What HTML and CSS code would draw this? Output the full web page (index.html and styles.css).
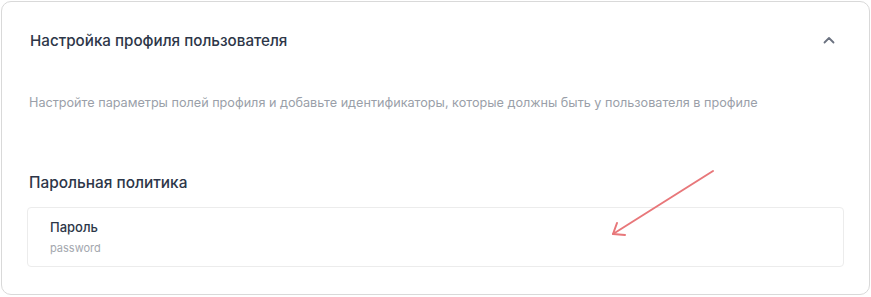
FILE: index.html
```html
<!DOCTYPE html>
<html lang="ru">
<head>
<meta charset="utf-8">
<link rel="stylesheet" href="styles.css">
</head>
<body>
<div class="card">
  <div class="header">
    <h2 class="title">Настройка профиля пользователя</h2>
    <svg class="chevron" width="12" height="8" viewBox="0 0 12 8"><path d="M1.5 6.5 L6 2 L10.5 6.5" fill="none" stroke="#6b7280" stroke-width="1.8" stroke-linecap="round" stroke-linejoin="round"/></svg>
  </div>
  <p class="desc">Настройте параметры полей профиля и добавьте идентификаторы, которые должны быть у пользователя в профиле</p>
  <h3 class="section">Парольная политика</h3>
  <div class="field">
    <div class="field-name">Пароль</div>
    <div class="field-key">password</div>
  </div>
  <svg class="arrow" width="871" height="297" viewBox="0 0 871 297"><g fill="none" stroke="#e8777a" stroke-width="2" stroke-linecap="round" stroke-linejoin="round"><path d="M713 171 L613 234"/><path d="M625 235 L613 234 L617 223"/></g></svg>
</div>
</body>
</html>
```
FILE: styles.css
```css
html, body { margin: 0; padding: 0; background: #fff; }
body { font-family: Inter, "Noto Sans", sans-serif; width: 871px; height: 297px; overflow: hidden; }
.card {
  margin: 1px;
  width: 869px;
  height: 294px;
  border: 1.5px solid #d9d9d9;
  border-radius: 10px;
  box-sizing: border-box;
  padding: 0 25px 0 25px;
}
.header {
  display: flex;
  align-items: center;
  justify-content: space-between;
  height: 76px;
  padding: 0 9px 0 3px;
}
.title { margin: 0; font-size: 15.2px; font-weight: 500; color: #2d3648; }
.chevron { display: block; }
.desc { margin: 16px 0 0 2px; font-size: 12.65px; color: #9a9fa9; line-height: 18px; }
.section { margin: 61px 0 0 2px; font-size: 15.4px; font-weight: 500; color: #2d3648; line-height: 20px; }
.field {
  margin-top: 14px;
  border: 1px solid #ececec;
  border-radius: 4px;
  height: 60px;
  box-sizing: border-box;
  padding: 10px 22px;
}
.field-name { font-size: 13px; font-weight: 500; color: #2d3648; line-height: 18px; }
.field-key { font-size: 11px; color: #a3a7ae; line-height: 14px; margin-top: 5px; }
.arrow { position: absolute; left: 0; top: 0; pointer-events: none; }
```
